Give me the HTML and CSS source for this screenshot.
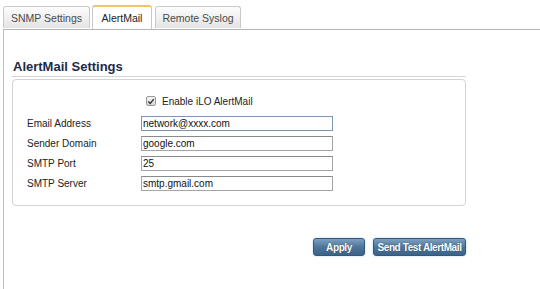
FILE: index.html
```html
<!DOCTYPE html>
<html lang="en">
<head>
    <meta charset="UTF-8">
    <title>AlertMail</title>
    <link rel="stylesheet" href="styles.css">
</head>
<body>
    <div class="tabs">
        <div class="tab tab-snmp">SNMP Settings</div>
        <div class="tab tab-active tab-alert">AlertMail</div>
        <div class="tab tab-syslog">Remote Syslog</div>
    </div>
    <div class="panel">
        <div class="section">
            <h2 class="section-title">AlertMail Settings</h2>
            <div class="box">
                <label class="check-row">
                    <span class="checkbox">
                        <svg width="9" height="9" viewBox="0 0 9 9"><path d="M1.5 4.6 L3.6 6.8 L7.6 1.8" fill="none" stroke="#333" stroke-width="1.6"/></svg>
                    </span>
                    <span>Enable iLO AlertMail</span>
                </label>
                <div class="fields">
                    <label for="email">Email Address</label>
                    <input type="text" id="email" class="focused" value="network@xxxx.com">
                    <label for="domain">Sender Domain</label>
                    <input type="text" id="domain" value="google.com">
                    <label for="port">SMTP Port</label>
                    <input type="text" id="port" value="25">
                    <label for="server">SMTP Server</label>
                    <input type="text" id="server" value="smtp.gmail.com">
                </div>
            </div>
            <div class="actions">
                <button type="button" class="btn btn-apply">Apply</button>
                <button type="button" class="btn btn-test">Send Test AlertMail</button>
            </div>
        </div>
    </div>
</body>
</html>
```

FILE: styles.css
```css
html, body {
    height: 100%;
}

body {
    margin: 0;
    background-color: #fff;
    font-family: "Liberation Sans", Arial, sans-serif;
    font-size: 10px;
    color: #222;
    display: flex;
    flex-direction: column;
}

.tabs {
    display: flex;
    align-items: flex-end;
    gap: 2px;
    padding: 5px 0 0 3px;
    height: 24px;
    position: relative;
    z-index: 1;
}

.tab {
    box-sizing: border-box;
    height: 22px;
    margin-bottom: 1px;
    display: flex;
    align-items: center;
    justify-content: center;
    border: 1px solid #c9c9c9;
    border-bottom: none;
    border-radius: 3px 3px 0 0;
    background: linear-gradient(#fdfdfd, #e4e4e4);
    color: #4a4a4a;
    font-size: 10.5px;
}

.tab-snmp { width: 87px; }
.tab-alert { width: 60px; }
.tab-syslog { width: 86px; margin-left: 1px; }

.tab-active {
    height: 24px;
    margin-bottom: 0;
    background: #fff;
    border-top: 2px solid #efc46a;
    color: #222;
}

.panel {
    flex: 1;
    margin-left: 3px;
    border-left: 1px solid #bdbdbd;
    border-top: 1px solid #b5b5b5;
}

.section {
    width: 454px;
    margin-left: 8px;
    padding-top: 29px;
}

.section-title {
    margin: 0;
    padding: 0 0 2px 1px;
    font-size: 13px;
    line-height: 15px;
    color: #1c2b47;
    border-bottom: 1px solid #d4d4d4;
}

.box {
    margin-top: 2px;
    height: 127px;
    box-sizing: border-box;
    border: 1px solid #d3d3d3;
    border-radius: 4px;
    padding: 13px 0 0 14px;
}

.check-row {
    display: flex;
    align-items: center;
    height: 16px;
    margin: 0 0 7px 119px;
    color: #222;
}

.checkbox {
    box-sizing: border-box;
    width: 10px;
    height: 10px;
    margin-right: 6px;
    border: 1px solid #9a9a9a;
    border-radius: 2px;
    background: linear-gradient(#f4f4f4, #d8d8d8);
    display: flex;
    align-items: center;
    justify-content: center;
}

.fields {
    display: grid;
    grid-template-columns: 114px 192px;
    row-gap: 5px;
    align-items: center;
}

.fields label {
    color: #222;
}

.fields input {
    box-sizing: border-box;
    height: 15px;
    width: 192px;
    margin: 0;
    padding: 0 1px;
    border: 1px solid #a5a5a5;
    border-top-color: #8a8a8a;
    font-family: "Liberation Sans", Arial, sans-serif;
    font-size: 10px;
    color: #111;
    background: #fff;
}

.fields input.focused {
    border-color: #7d97b3;
}

.actions {
    display: flex;
    justify-content: flex-end;
    gap: 8px;
    margin-top: 32px;
}

.btn {
    height: 18px;
    padding: 0;
    border: 1px solid #33587a;
    border-radius: 3px;
    background: linear-gradient(#7ca0c0, #4f769a 50%, #3b6387);
    color: #fff;
    font-family: "Liberation Sans", Arial, sans-serif;
    font-size: 10px;
    font-weight: bold;
    letter-spacing: -0.4px;
    white-space: nowrap;
    text-shadow: 0 0 1px #1e3a55;
    box-shadow: 0 0 2px #a8c8e6;
    cursor: pointer;
}

.btn-apply { width: 52px; }
.btn-test { width: 93px; }
```
